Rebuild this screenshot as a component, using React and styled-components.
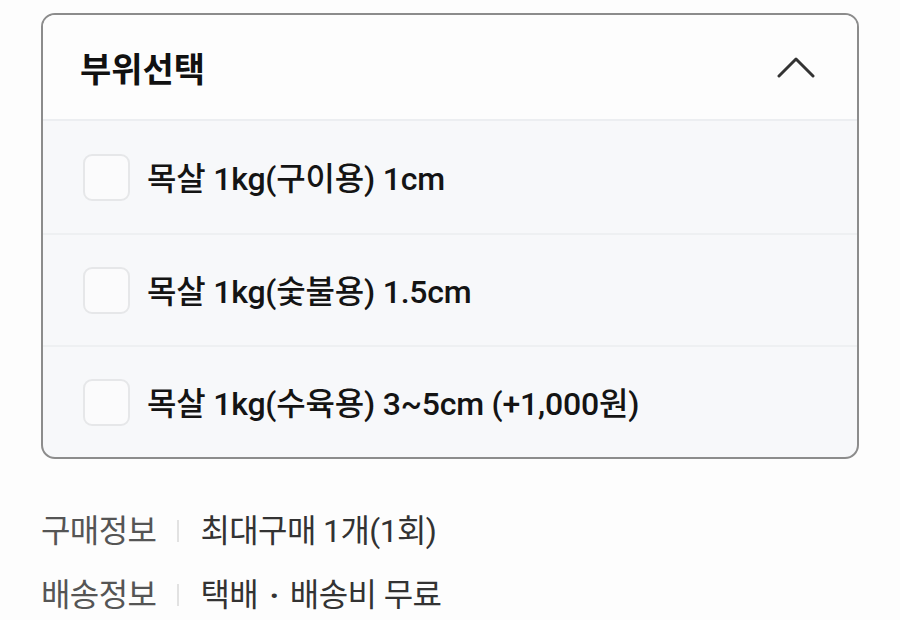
import React from "react";
import styled, { createGlobalStyle } from "styled-components";

const Global = createGlobalStyle`
  html, body { margin: 0; padding: 0; background: #fdfdfd; }
  body { font-family: Roboto, "Noto Sans CJK KR", sans-serif; }
`;

const Page = styled.div`
  width: 900px;
  height: 620px;
  box-sizing: border-box;
  padding: 13px 41px 0 41px;
  display: flex;
  flex-direction: column;
`;

const Card = styled.div`
  border: 2px solid #8c8c8c;
  border-radius: 14px;
  overflow: hidden;
  background: #f7f8fa;
`;

const Header = styled.div`
  height: 106px;
  box-sizing: border-box;
  display: flex;
  align-items: center;
  justify-content: space-between;
  padding: 0 42px 0 37px;
  background: #fdfdfd;
  border-bottom: 2px solid #eceef1;
`;

const Title = styled.div`
  font-size: 34px;
  font-weight: 700;
  color: #111;
  letter-spacing: 0;
`;

const Row = styled.label`
  height: 112px;
  box-sizing: border-box;
  display: flex;
  align-items: center;
  gap: 17px;
  padding-left: 40px;
  border-top: ${(p) => (p.$first ? "none" : "2px solid #eef0f2")};
`;

const Box = styled.span`
  width: 47px;
  height: 47px;
  box-sizing: border-box;
  border: 2px solid #e6e7e9;
  border-radius: 9px;
  background: #fbfbfc;
`;

const RowText = styled.span`
  font-size: 32px;
  font-weight: 500;
  color: #141414;
  letter-spacing: -0.2px;
  margin-top: -3px;
`;

const Info = styled.div`
  margin-top: 52px;
  display: flex;
  flex-direction: column;
  gap: 24px;
`;

const InfoLine = styled.div`
  display: flex;
  align-items: center;
  font-size: 32px;
  line-height: 40px;
  letter-spacing: -0.6px;
`;

const InfoLabel = styled.span`
  color: #555;
  font-weight: 400;
`;

const Sep = styled.span`
  width: 2px;
  height: 22px;
  background: #e2e2e2;
  margin: 0 21px 0 21px;
`;

const InfoValue = styled.span`
  color: #333;
  font-weight: 400;
  white-space: pre;
`;

const Dot = styled.span`
  margin: 0 4px;
  font-weight: 700;
`;

const Chevron = () => (
  <svg width="38" height="22" viewBox="0 0 38 22" fill="none">
    <path d="M2 20 L19 3 L36 20" stroke="#333" strokeWidth="3" strokeLinecap="round" strokeLinejoin="round" />
  </svg>
);

const items = [
  "목살 1kg(구이용) 1cm",
  "목살 1kg(숯불용) 1.5cm",
  "목살 1kg(수육용) 3~5cm (+1,000원)",
];

export default function App() {
  return (
    <Page>
      <Global />
      <Card>
        <Header>
          <Title>부위선택</Title>
          <Chevron />
        </Header>
        {items.map((t, i) => (
          <Row key={t} $first={i === 0}>
            <Box />
            <RowText>{t}</RowText>
          </Row>
        ))}
      </Card>
      <Info>
        <InfoLine>
          <InfoLabel>구매정보</InfoLabel>
          <Sep />
          <InfoValue>최대구매 1개(1회)</InfoValue>
        </InfoLine>
        <InfoLine>
          <InfoLabel>배송정보</InfoLabel>
          <Sep />
          <InfoValue>
            택배 <Dot>·</Dot> 배송비 무료
          </InfoValue>
        </InfoLine>
      </Info>
    </Page>
  );
}
